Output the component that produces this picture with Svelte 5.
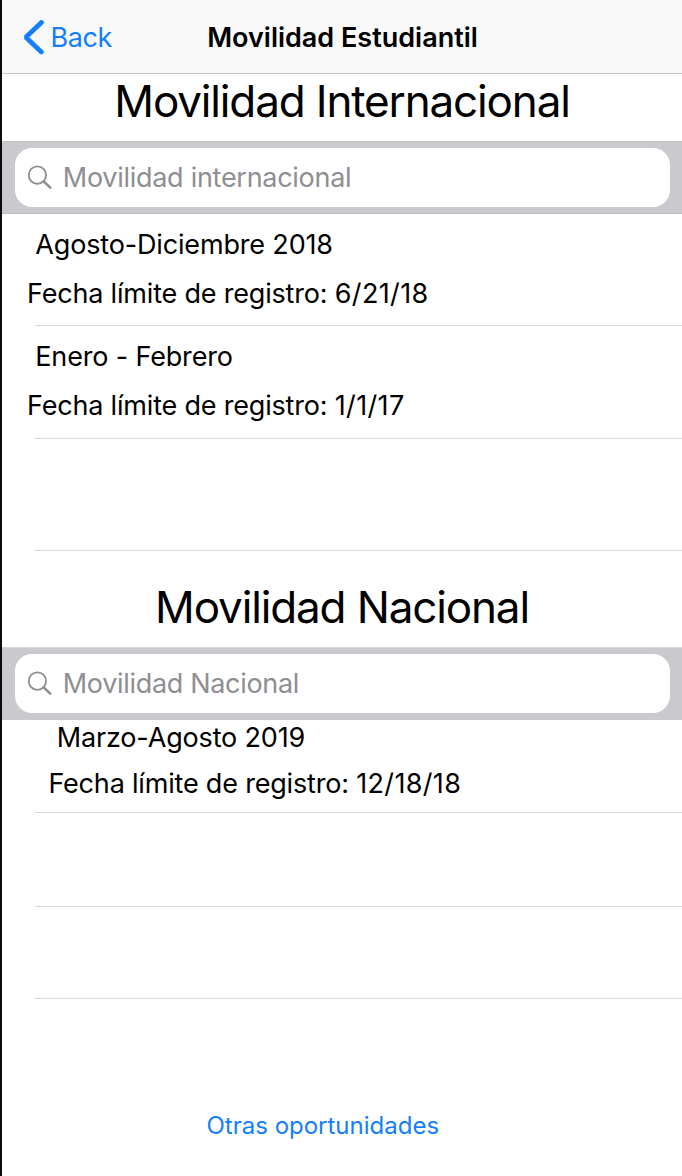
<script>
  const international = {
    title: 'Movilidad Internacional',
    placeholder: 'Movilidad internacional',
    rows: [
      { period: 'Agosto-Diciembre 2018', limit: '6/21/18' },
      { period: 'Enero - Febrero', limit: '1/1/17' },
      null
    ]
  };
  const national = {
    title: 'Movilidad Nacional',
    placeholder: 'Movilidad Nacional',
    rows: [
      { period: 'Marzo-Agosto 2019', limit: '12/18/18' },
      null,
      null
    ]
  };
</script>

{#snippet search(text)}
  <div class="search">
    <div class="field">
      <svg class="glass" width="26" height="26" viewBox="0 0 26 26" fill="none" stroke="#8e8e93">
        <circle cx="10.4" cy="10.1" r="8.7" stroke-width="1.8" />
        <path d="M16.6 16.4 L23.3 22.6" stroke-width="2.6" stroke-linecap="round" />
      </svg>
      <span>{text}</span>
    </div>
  </div>
{/snippet}

{#snippet list(rows)}
  <ul>
    {#each rows as row}
      <li>
        {#if row}
          <p class="period">{row.period}</p>
          <p class="limit">Fecha límite de registro: <span>{row.limit}</span></p>
        {/if}
      </li>
    {/each}
  </ul>
{/snippet}

<main>
  <header>
    <div class="back">
      <svg width="22" height="36" viewBox="0 0 22 36" fill="none" stroke="#157efb" stroke-width="4.8" stroke-linecap="round">
        <path d="M18.4 2.5 L2.8 17.2 L18.4 31.9" stroke-linejoin="bevel" />
      </svg>
      <span>Back</span>
    </div>
    <h1>Movilidad Estudiantil</h1>
    <div></div>
  </header>

  <section class="international">
    <h2>{international.title}</h2>
    {@render search(international.placeholder)}
    {@render list(international.rows)}
  </section>

  <section class="national">
    <h2>{national.title}</h2>
    {@render search(national.placeholder)}
    {@render list(national.rows)}
  </section>

  <footer><span>Otras oportunidades</span></footer>
</main>

<style>
  :global(body) {
    margin: 0;
    background: #fff;
  }
  main {
    box-sizing: border-box;
    width: 682px;
    height: 1176px;
    border-left: 2px solid #0c0c0e;
    background: #fff;
    color: #000;
    font: 400 27px/32px Inter, sans-serif;
    overflow: hidden;
    white-space: nowrap;
  }
  h1, h2, p, ul {
    margin: 0;
    padding: 0;
  }
  header {
    box-sizing: border-box;
    height: 74px;
    padding-top: 3px;
    display: grid;
    grid-template-columns: 1fr auto 1fr;
    align-items: center;
    background: #f9f9f9;
    border-bottom: 1px solid #c9c9cc;
  }
  .back {
    display: flex;
    align-items: center;
    gap: 6px;
    padding-left: 20.5px;
    color: #157efb;
    letter-spacing: -0.4px;
  }
  h1 {
    font-size: 27px;
    line-height: 32px;
    font-weight: 600;
    padding-left: 1px;
  }
  h2 {
    box-sizing: border-box;
    font-size: 44px;
    font-weight: 400;
    text-align: center;
    line-height: 54px;
    height: 67px;
  }
  .international h2 {
    letter-spacing: -1.15px;
  }
  .national h2 {
    height: 96px;
    padding-top: 29px;
    letter-spacing: -1.14px;
  }
  .search {
    box-sizing: border-box;
    height: 73px;
    padding: 6px 12.5px 6px 13.3px;
    background: #c9c9ce;
    border-top: 1px solid #bebec3;
    border-bottom: 1px solid #bebec3;
  }
  .national .search {
    border-top-color: #d8d8dc;
    border-bottom-color: #c9c9ce;
  }
  .field {
    box-sizing: border-box;
    height: 59.3px;
    display: flex;
    align-items: center;
    gap: 9.5px;
    padding-left: 12px;
    border-radius: 17px;
    background: #fff;
    color: #8e8e93;
    letter-spacing: -0.28px;
  }
  .national .field {
    letter-spacing: -0.32px;
  }
  .glass {
    display: block;
    margin-top: 1px;
  }
  ul {
    list-style: none;
  }
  li {
    box-sizing: border-box;
    height: 112px;
    padding: 15px 0 0 25px;
    background: linear-gradient(#d8d8db, #d8d8db) 32.6px 100% / 100% 1px no-repeat;
  }
  li:nth-child(2) {
    height: 113px;
  }
  .period {
    padding-left: 8.3px;
    letter-spacing: -0.16px;
  }
  .limit {
    margin-top: 17px;
    letter-spacing: -0.19px;
  }
  .limit span {
    letter-spacing: 0.35px;
  }
  .national li {
    height: 93px;
    padding: 2px 0 0 46.4px;
  }
  .national li:nth-child(2) {
    height: 94px;
  }
  .national li:nth-child(3) {
    height: 92px;
  }
  .national .limit {
    margin-top: 14px;
  }
  footer {
    padding: 111px 0 0 204.5px;
    font-size: 24px;
    color: #157efb;
  }
</style>
